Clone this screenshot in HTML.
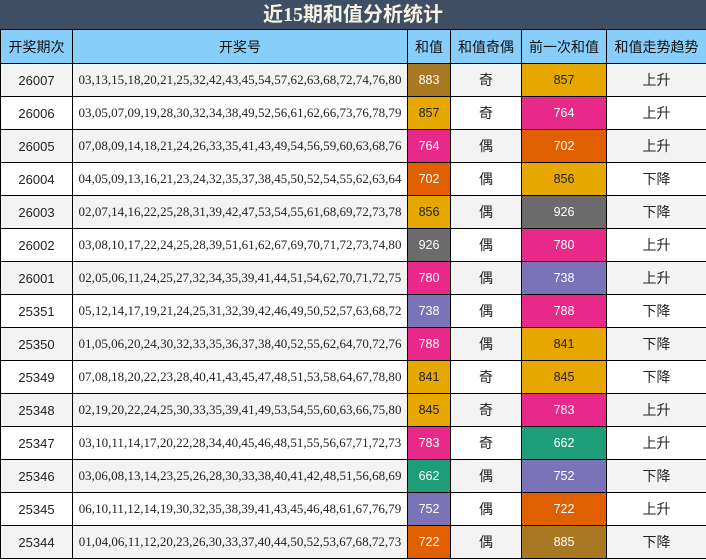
<!DOCTYPE html>
<html><head><meta charset="utf-8"><style>
body{margin:0;width:706px;height:560px;overflow:hidden;background:#fff;font-family:"Liberation Sans","Noto Sans CJK SC",sans-serif}
.t{position:absolute;left:0;top:0;width:706px;height:30px;background:#3f4f63;color:#f7f2e4;font:bold 20px "Liberation Serif","Noto Sans CJK SC",serif;text-align:center;line-height:30px}
table{position:absolute;left:0;top:29px;border-collapse:collapse;width:706px;table-layout:fixed}
td,th{border:1px solid #000;padding:0;text-align:center;font-size:13px;color:#222}
th{background:#87cefa;font-weight:normal;font-size:14px;height:33px;color:#111}
td{height:32px}
tr:nth-child(even) td{background:#f3f3f3}
td.n{font-family:"Liberation Serif",serif;font-size:13px;letter-spacing:0.02px;white-space:nowrap}
td.q{font-size:14px}
.b,.g,.p,.o,.y,.v,.e{font-size:12.5px}
.b{background:#a87822!important;color:#fff}
.g{background:#e6a800!important;color:#222}
.p{background:#e8298a!important;color:#fff}
.o{background:#e06000!important;color:#fff}
.y{background:#6b6b6b!important;color:#fff}
.v{background:#7b73b8!important;color:#fff}
.e{background:#1e9e78!important;color:#fff}
</style></head><body>
<div class="t">近15期和值分析统计</div>
<table>
<colgroup><col style="width:72px"><col style="width:335px"><col style="width:43px"><col style="width:71px"><col style="width:85px"><col style="width:100px"></colgroup>
<tr><th>开奖期次</th><th>开奖号</th><th>和值</th><th>和值奇偶</th><th>前一次和值</th><th>和值走势趋势</th></tr>
<tr><td>26007</td><td class="n">03,13,15,18,20,21,25,32,42,43,45,54,57,62,63,68,72,74,76,80</td><td class="b">883</td><td class="q">奇</td><td class="g">857</td><td class="q">上升</td></tr>
<tr><td>26006</td><td class="n">03,05,07,09,19,28,30,32,34,38,49,52,56,61,62,66,73,76,78,79</td><td class="g">857</td><td class="q">奇</td><td class="p">764</td><td class="q">上升</td></tr>
<tr><td>26005</td><td class="n">07,08,09,14,18,21,24,26,33,35,41,43,49,54,56,59,60,63,68,76</td><td class="p">764</td><td class="q">偶</td><td class="o">702</td><td class="q">上升</td></tr>
<tr><td>26004</td><td class="n">04,05,09,13,16,21,23,24,32,35,37,38,45,50,52,54,55,62,63,64</td><td class="o">702</td><td class="q">偶</td><td class="g">856</td><td class="q">下降</td></tr>
<tr><td>26003</td><td class="n">02,07,14,16,22,25,28,31,39,42,47,53,54,55,61,68,69,72,73,78</td><td class="g">856</td><td class="q">偶</td><td class="y">926</td><td class="q">下降</td></tr>
<tr><td>26002</td><td class="n">03,08,10,17,22,24,25,28,39,51,61,62,67,69,70,71,72,73,74,80</td><td class="y">926</td><td class="q">偶</td><td class="p">780</td><td class="q">上升</td></tr>
<tr><td>26001</td><td class="n">02,05,06,11,24,25,27,32,34,35,39,41,44,51,54,62,70,71,72,75</td><td class="p">780</td><td class="q">偶</td><td class="v">738</td><td class="q">上升</td></tr>
<tr><td>25351</td><td class="n">05,12,14,17,19,21,24,25,31,32,39,42,46,49,50,52,57,63,68,72</td><td class="v">738</td><td class="q">偶</td><td class="p">788</td><td class="q">下降</td></tr>
<tr><td>25350</td><td class="n">01,05,06,20,24,30,32,33,35,36,37,38,40,52,55,62,64,70,72,76</td><td class="p">788</td><td class="q">偶</td><td class="g">841</td><td class="q">下降</td></tr>
<tr><td>25349</td><td class="n">07,08,18,20,22,23,28,40,41,43,45,47,48,51,53,58,64,67,78,80</td><td class="g">841</td><td class="q">奇</td><td class="g">845</td><td class="q">下降</td></tr>
<tr><td>25348</td><td class="n">02,19,20,22,24,25,30,33,35,39,41,49,53,54,55,60,63,66,75,80</td><td class="g">845</td><td class="q">奇</td><td class="p">783</td><td class="q">上升</td></tr>
<tr><td>25347</td><td class="n">03,10,11,14,17,20,22,28,34,40,45,46,48,51,55,56,67,71,72,73</td><td class="p">783</td><td class="q">奇</td><td class="e">662</td><td class="q">上升</td></tr>
<tr><td>25346</td><td class="n">03,06,08,13,14,23,25,26,28,30,33,38,40,41,42,48,51,56,68,69</td><td class="e">662</td><td class="q">偶</td><td class="v">752</td><td class="q">下降</td></tr>
<tr><td>25345</td><td class="n">06,10,11,12,14,19,30,32,35,38,39,41,43,45,46,48,61,67,76,79</td><td class="v">752</td><td class="q">偶</td><td class="o">722</td><td class="q">上升</td></tr>
<tr><td>25344</td><td class="n">01,04,06,11,12,20,23,26,30,33,37,40,44,50,52,53,67,68,72,73</td><td class="o">722</td><td class="q">偶</td><td class="b">885</td><td class="q">下降</td></tr>
</table>
</body></html>
